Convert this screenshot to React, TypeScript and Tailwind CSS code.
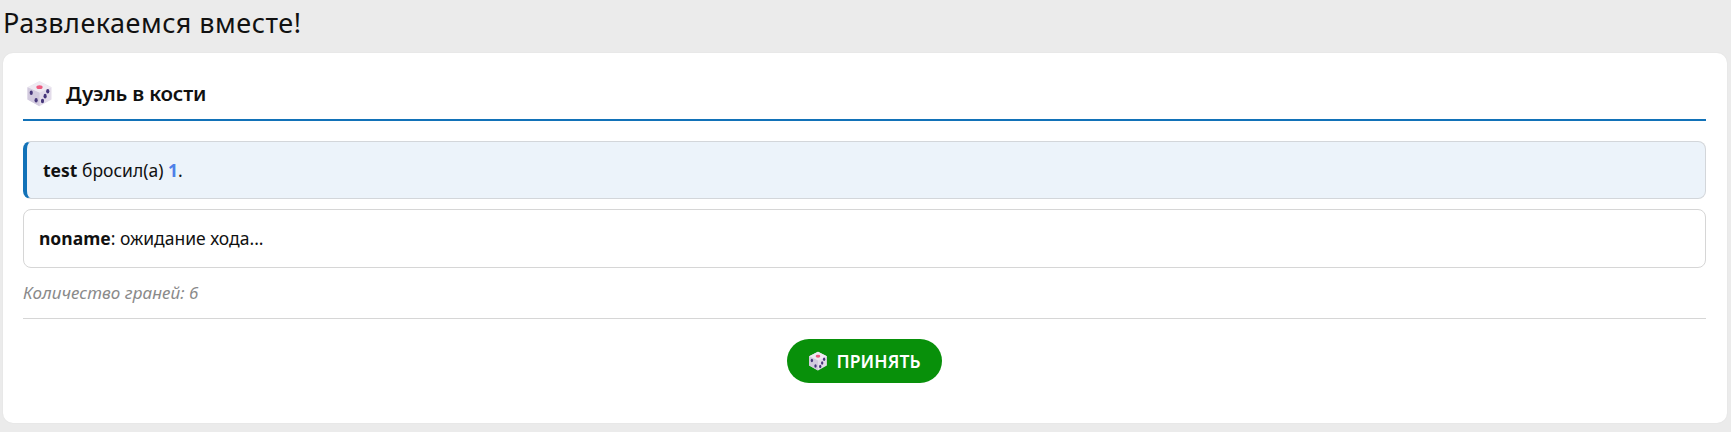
import React from 'react';

const Dice: React.FC<{ className?: string }> = ({ className }) => (
  <svg viewBox="0 0 36 36" className={className}>
    <path d="M18 1.5 34 9.5 34 26 18 35 2 26 2 9.5Z" fill="#e3dcea" />
    <path d="M18 1.5 34 9.5 18 17 2 9.5Z" fill="#eeeaf2" />
    <path d="M2 9.5 18 17 18 35 2 26Z" fill="#d2cade" />
    <ellipse cx="18" cy="9.5" rx="4.2" ry="2.6" fill="#ee5c80" />
    <ellipse cx="7" cy="17" rx="2.1" ry="3.1" fill="#46367a" />
    <ellipse cx="13.5" cy="27" rx="2.1" ry="3.1" fill="#46367a" />
    <ellipse cx="29" cy="15" rx="2.1" ry="3.1" fill="#46367a" />
    <ellipse cx="25.5" cy="21.5" rx="2.1" ry="3.1" fill="#46367a" />
    <ellipse cx="22" cy="28" rx="2.1" ry="3.1" fill="#46367a" />
  </svg>
);

const App: React.FC = () => {
  return (
    <div className="h-[432px] bg-[#ebebeb] pl-[3px] pr-1 font-['Noto_Sans',sans-serif] text-[#111] overflow-hidden">
      <h1 className="h-[53px] pt-[3px] text-[27px] leading-[40px] tracking-[0.5px] font-normal">Развлекаемся вместе!</h1>

      <div className="h-[370px] rounded-[10px] bg-white pl-5 pr-[21px] pt-[15px] shadow-[0_0_2px_rgba(0,0,0,0.06)]">
        <div className="flex h-[53px] items-center gap-[13px] border-b-2 border-[#1272b8] pl-[3px]">
          <Dice className="h-[27px] w-[27px]" />
          <span className="text-[20.5px] font-semibold tracking-[-0.2px]">Дуэль в кости</span>
        </div>

        <div className="mt-5 flex h-[58px] items-center rounded-lg border border-[#d3d6da] border-l-4 border-l-[#1272b8] bg-[#ecf3fa] pl-4 text-[17.5px]">
          <span>
            <b className="font-bold">test</b> бросил(а) <b className="font-bold text-[#4f80e8]">1</b>.
          </span>
        </div>

        <div className="mt-[10px] flex h-[59px] items-center rounded-lg border border-[#d6d6d6] bg-white pl-[15px] text-[17.5px]">
          <span>
            <b className="font-bold">noname</b>: ожидание хода...
          </span>
        </div>

        <div className="mt-[12px] h-[39px] border-b border-[#d6d6d6] text-[17px] leading-[26px] italic tracking-[0.07px] text-[#8a8a8a]">
          Количество граней: 6
        </div>

        <div className="mt-5 flex justify-center">
          <button className="flex h-[44px] w-[155px] items-center justify-center gap-2 rounded-full bg-[#08900a] text-[17.5px] font-semibold tracking-[0.1px] text-white">
            <Dice className="h-[20px] w-[20px]" />
            ПРИНЯТЬ
          </button>
        </div>
      </div>
    </div>
  );
};

export default App;
